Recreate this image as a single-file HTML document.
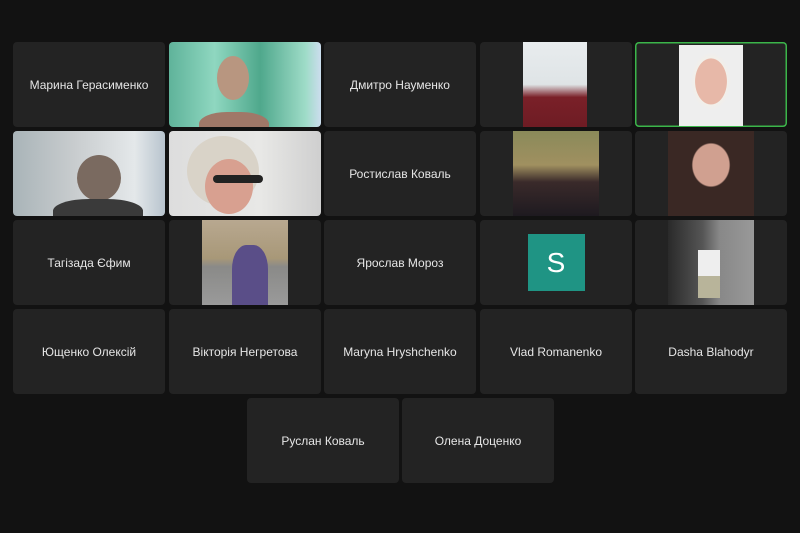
<!DOCTYPE html>
<html><head><meta charset="utf-8"><style>
body{margin:0;width:800px;height:533px;background:#121212;position:relative;overflow:hidden;font-family:"Liberation Sans",sans-serif}
.t{position:absolute;width:152px;height:85px;background:#232323;border-radius:4px;overflow:hidden;color:#e6e6e6;font-size:12px;display:flex;align-items:center;justify-content:center}
.i{position:absolute;top:0;height:85px}
</style></head><body>
<!-- row1 -->
<div class="t" style="left:13px;top:42px">Марина Герасименко</div>
<div class="t" style="left:169px;top:42px;background:linear-gradient(90deg,#5fb39a,#8fd7c0 30%,#4fa88c 60%,#9fdcc8 90%,#cde)">
 <div style="position:absolute;left:48px;top:14px;width:32px;height:44px;border-radius:50%;background:#b89680"></div>
 <div style="position:absolute;left:30px;top:70px;width:70px;height:30px;border-radius:40% 40% 0 0;background:#a07868"></div></div>
<div class="t" style="left:324px;top:42px">Дмитро Науменко</div>
<div class="t" style="left:480px;top:42px"><div class="i" style="left:43px;width:64px;background:linear-gradient(180deg,#e8ecee 0%,#dfe4e6 50%,#7a2028 65%,#6e1c24 100%)"></div></div>
<div class="t" style="left:635px;top:42px;box-shadow:inset 0 0 0 1.5px #3bb54a"><div class="i" style="left:44px;top:3px;height:81px;width:64px;background:radial-gradient(ellipse 35% 40% at 50% 45%,#e7b8a8 70%,#f2efe9 72%,#eee 90%)"></div></div>
<!-- row2 -->
<div class="t" style="left:13px;top:131px;background:linear-gradient(90deg,#a9b4b8,#c8ccce 40%,#e4e8ea 80%,#b8c4ce)">
 <div style="position:absolute;left:64px;top:24px;width:44px;height:46px;border-radius:50%;background:#7a6a60"></div>
 <div style="position:absolute;left:40px;top:68px;width:90px;height:30px;border-radius:40% 40% 0 0;background:#3a3a3a"></div></div>
<div class="t" style="left:169px;top:131px;background:linear-gradient(90deg,#ddd 0%,#e8e8e6 60%,#cfcfcf)">
 <div style="position:absolute;left:18px;top:5px;width:72px;height:70px;border-radius:50%;background:#d9d3c8"></div>
 <div style="position:absolute;left:36px;top:28px;width:48px;height:55px;border-radius:50%;background:#d8a090"></div>
 <div style="position:absolute;left:44px;top:44px;width:50px;height:8px;background:#222;border-radius:4px"></div></div>
<div class="t" style="left:324px;top:131px">Ростислав Коваль</div>
<div class="t" style="left:480px;top:131px"><div class="i" style="left:33px;width:86px;background:linear-gradient(180deg,#8a8a5a,#a09060 40%,#3a2a2a 60%,#1e1a20)"></div></div>
<div class="t" style="left:635px;top:131px"><div class="i" style="left:33px;width:86px;background:radial-gradient(ellipse 30% 35% at 50% 40%,#d0a090 70%,#3a2824 75%),#3a2824"></div></div>
<!-- row3 -->
<div class="t" style="left:13px;top:220px">Тагізада Єфим</div>
<div class="t" style="left:169px;top:220px"><div class="i" style="left:33px;width:86px;background:linear-gradient(180deg,#b8a890 0%,#a89878 45%,#8a8a88 55%,#9a9a9a)">
 <div style="position:absolute;left:30px;top:25px;width:36px;height:60px;border-radius:40% 40% 0 0;background:#5a4e88"></div></div></div>
<div class="t" style="left:324px;top:220px">Ярослав Мороз</div>
<div class="t" style="left:480px;top:220px"><div style="width:57px;height:57px;background:#1f9484;color:#fff;font-size:28px;display:flex;align-items:center;justify-content:center">S</div></div>
<div class="t" style="left:635px;top:220px"><div class="i" style="left:33px;width:86px;background:linear-gradient(90deg,#2a2a2a,#555 40%,#888 60%,#999)">
 <div style="position:absolute;left:30px;top:30px;width:22px;height:28px;background:#eee"></div>
 <div style="position:absolute;left:30px;top:56px;width:22px;height:22px;background:#b8b49a"></div></div></div>
<!-- row4 -->
<div class="t" style="left:13px;top:309px">Ющенко Олексій</div>
<div class="t" style="left:169px;top:309px">Вікторія Негретова</div>
<div class="t" style="left:324px;top:309px">Maryna Hryshchenko</div>
<div class="t" style="left:480px;top:309px">Vlad Romanenko</div>
<div class="t" style="left:635px;top:309px">Dasha Blahodyr</div>
<!-- row5 -->
<div class="t" style="left:247px;top:398px">Руслан Коваль</div>
<div class="t" style="left:402px;top:398px">Олена Доценко</div>
</body></html>
